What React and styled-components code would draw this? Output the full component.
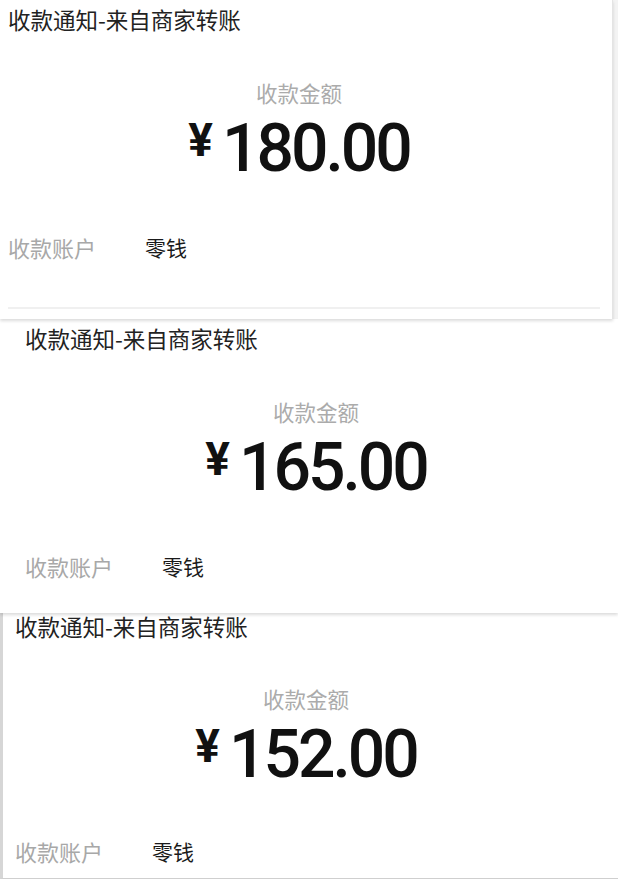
import React from "react";
import styled, { createGlobalStyle } from "styled-components";

const Global = createGlobalStyle`
  html, body { margin: 0; padding: 0; background: #f3f3f3; }
  body { font-family: "Noto Sans CJK SC", "Noto Sans", sans-serif; }
`;

const Page = styled.div`
  width: 618px;
  height: 879px;
  overflow: hidden;
  background: #f3f3f3;
  display: flex;
  flex-direction: column;
`;

const Shot = styled.section`
  position: relative;
  z-index: ${(p) => p.$z};
  flex: none;
  box-sizing: border-box;
  width: ${(p) => p.$width}px;
  height: ${(p) => p.$height}px;
  overflow: hidden;
  background: #fff;
  border-right: ${(p) => (p.$edgeRight ? "1px solid #e4e4e4" : "none")};
  border-left: ${(p) => (p.$edgeLeft ? "3px solid #d6d6d6" : "none")};
  border-bottom: ${(p) => (p.$edgeBottom ? "1px solid #cfcfcf" : "none")};
  box-shadow: ${(p) => (p.$shadow ? "0 2px 3px rgba(0,0,0,0.14)" : "none")};
`;

const Screen = styled.div`
  width: 598px;
  margin-left: ${(p) => p.$shift}px;
  padding: ${(p) => p.$top}px 0 0 8px;
  box-sizing: border-box;
  display: flex;
  flex-direction: column;
`;

const Title = styled.div`
  font-size: 22.5px;
  line-height: 26px;
  color: #222;
  white-space: nowrap;
`;

const Center = styled.div`
  display: flex;
  flex-direction: column;
  align-items: center;
  margin-top: ${(p) => p.$gap}px;
  margin-left: -8px;
`;

const Label = styled.div`
  font-size: 21.5px;
  line-height: 26px;
  color: #ababab;
`;

const Amount = styled.div`
  display: flex;
  align-items: flex-start;
  gap: 9px;
  margin-top: 10px;
`;

const Yen = styled.span`
  font-family: Roboto, "Liberation Sans", sans-serif;
  font-weight: 700;
  font-size: 46px;
  line-height: 44px;
  margin-top: 2px;
  color: #111;
`;

const Digits = styled.span`
  font-family: Roboto, "Liberation Sans", sans-serif;
  font-weight: 500;
  font-size: 66px;
  line-height: 66px;
  letter-spacing: -3px;
  color: #111;
`;

const Row = styled.div`
  display: flex;
  align-items: center;
  gap: 49px;
  margin-top: ${(p) => p.$gap}px;
  font-size: 22px;
  line-height: 26px;
`;

const RowKey = styled.span`
  color: #a8a8a8;
`;

const RowValue = styled.span`
  color: #1a1a1a;
  font-size: 21px;
`;

const Divider = styled.div`
  height: 2px;
  width: 592px;
  background: #f0f0f0;
  margin-top: 47px;
`;

function Receipt({ amount, shift, top = 6, gap = 48, rowGap = 52, divider }) {
  return (
    <Screen $shift={shift} $top={top}>
      <Title>收款通知-来自商家转账</Title>
      <Center $gap={gap}>
        <Label>收款金额</Label>
        <Amount>
          <Yen>¥</Yen>
          <Digits>{amount}</Digits>
        </Amount>
      </Center>
      <Row $gap={rowGap}>
        <RowKey>收款账户</RowKey>
        <RowValue>零钱</RowValue>
      </Row>
      {divider && <Divider />}
    </Screen>
  );
}

export default function App() {
  return (
    <>
      <Global />
      <Page>
        <Shot $width={613} $height={319} $edgeRight $shadow $z={3}>
          <Receipt amount="180.00" shift={0} divider />
        </Shot>
        <Shot $width={618} $height={294} $shadow $z={2}>
          <Receipt amount="165.00" shift={17} />
        </Shot>
        <Shot $width={618} $height={266} $edgeLeft $edgeBottom $z={1}>
          <Receipt amount="152.00" shift={4} top={0} gap={47} rowGap={50} />
        </Shot>
      </Page>
    </>
  );
}
